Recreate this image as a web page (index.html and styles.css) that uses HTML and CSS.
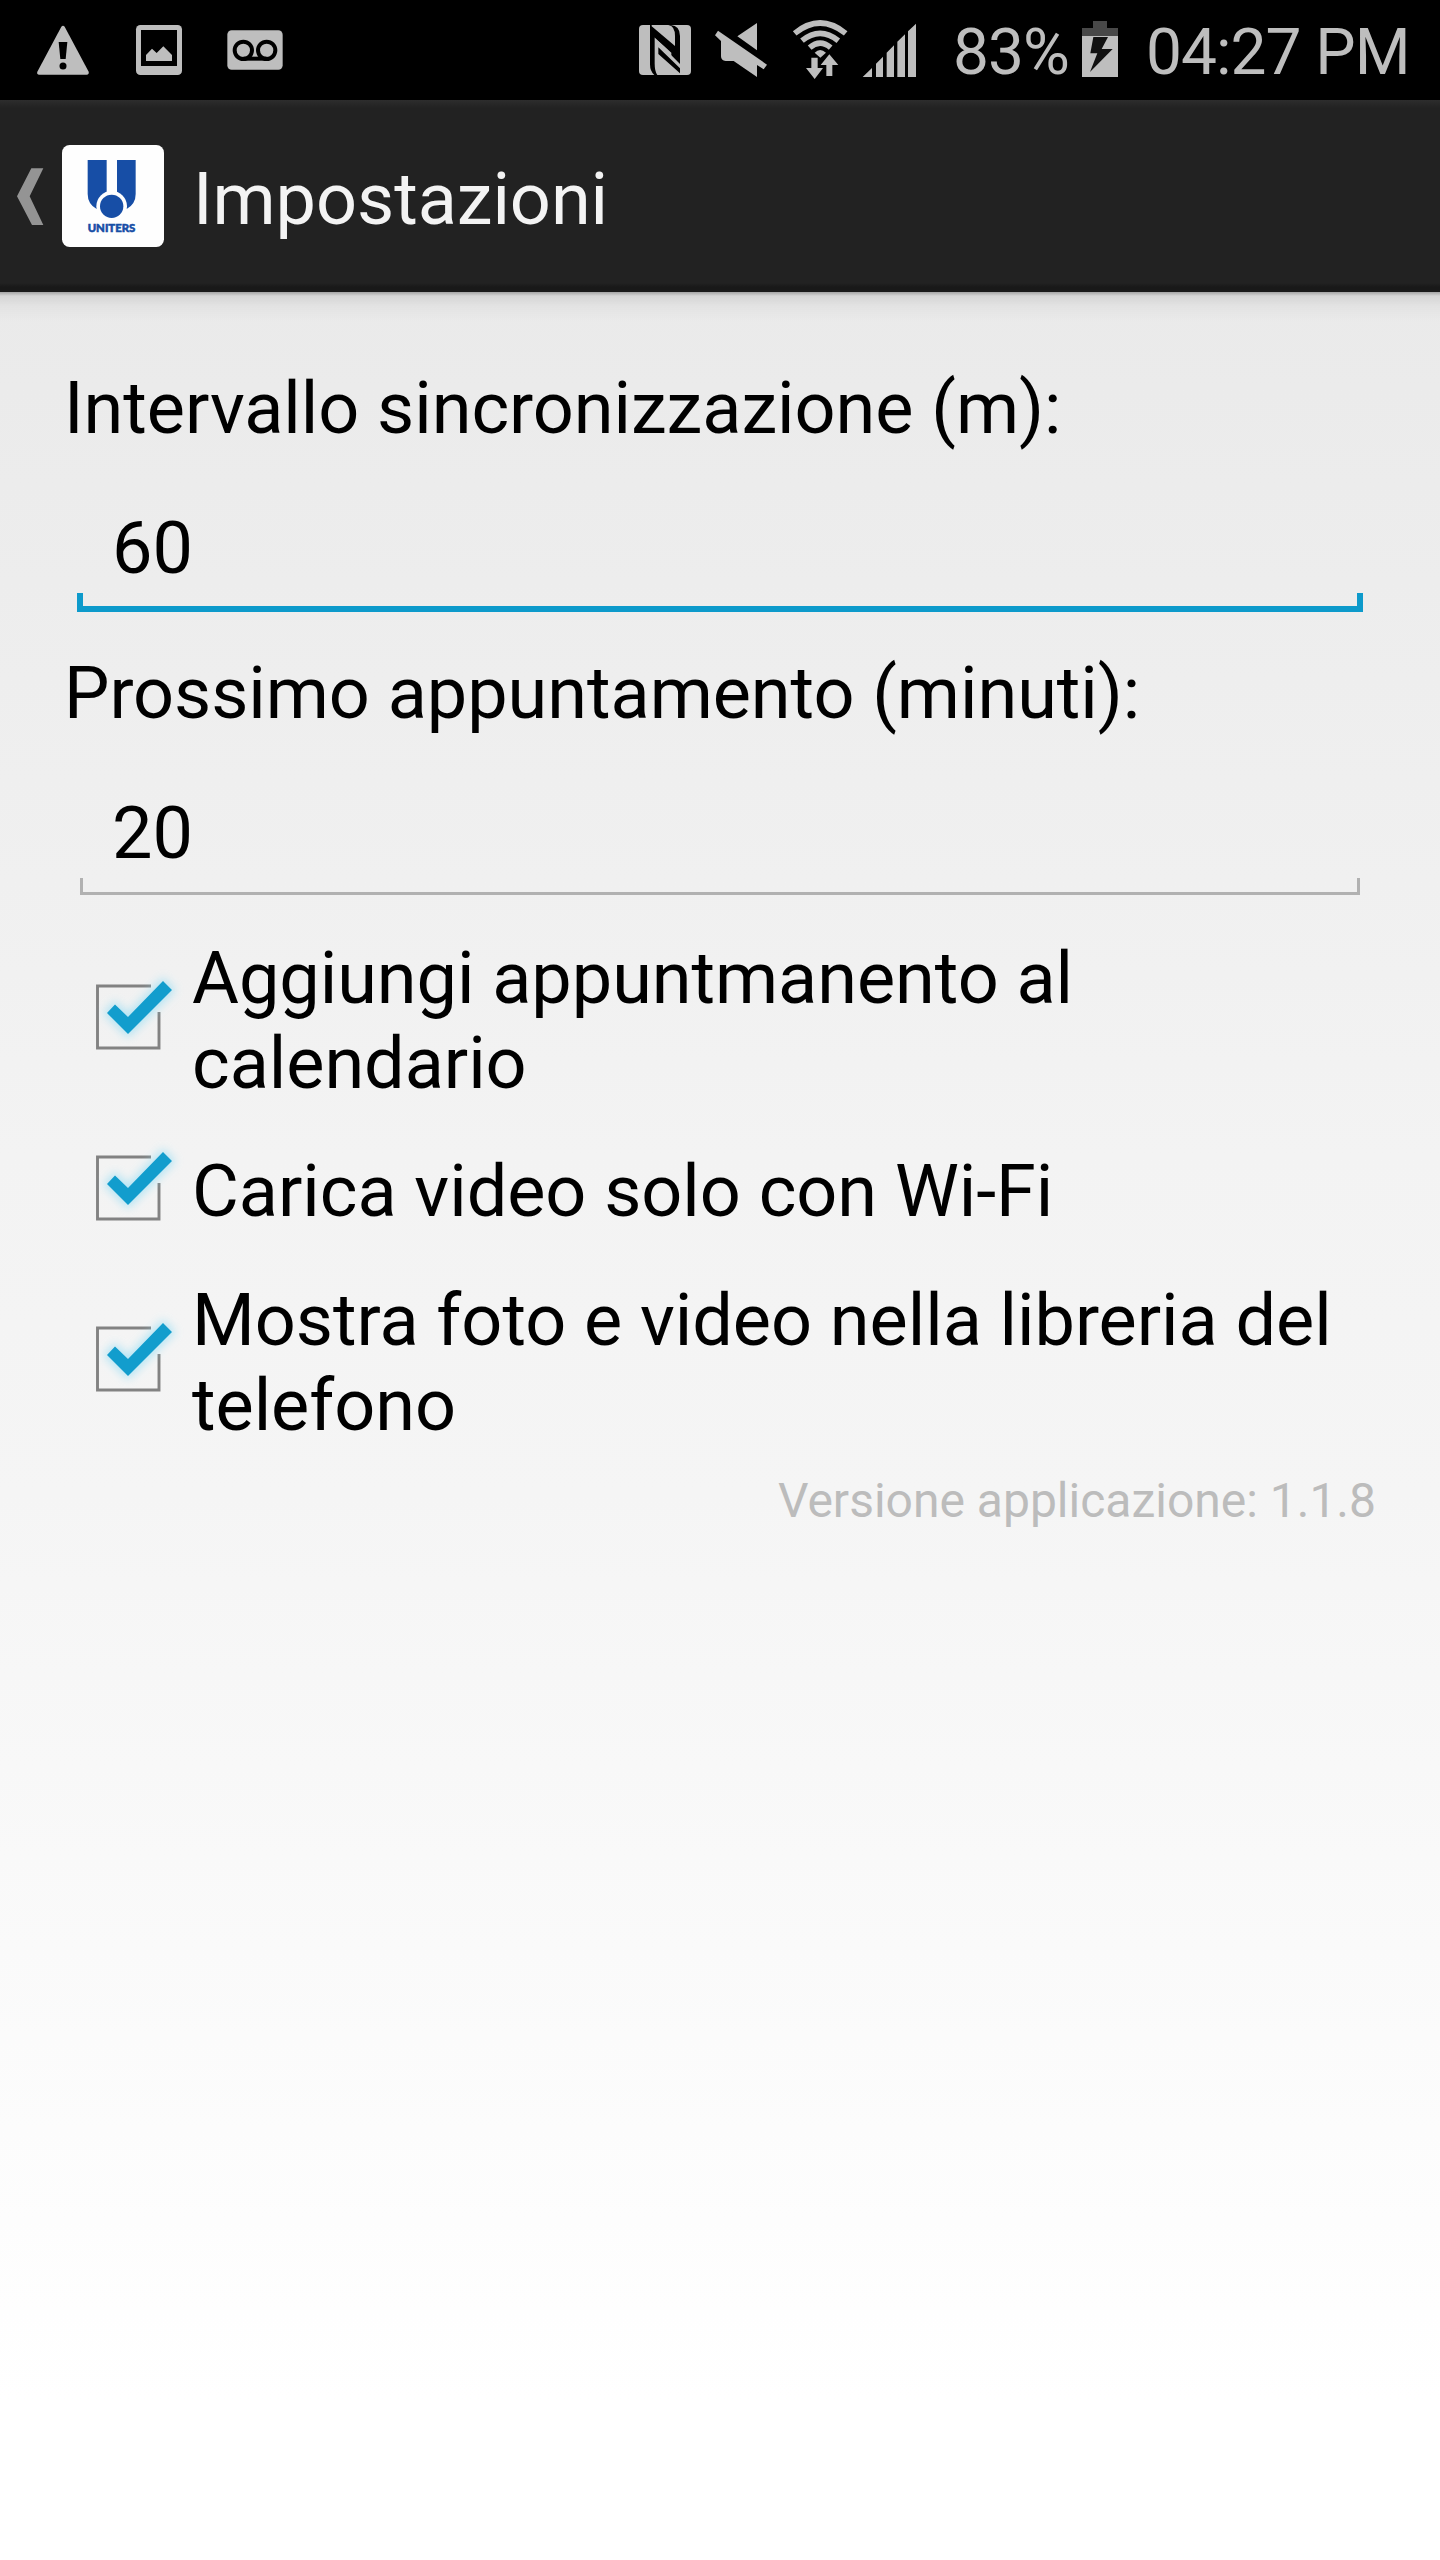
FILE: index.html
```
<!DOCTYPE html>
<html lang="it">
<head>
<meta charset="utf-8">
<title>Impostazioni</title>
<link rel="stylesheet" href="styles.css">
</head>
<body>
<svg class="defs" width="0" height="0" aria-hidden="true">
  <filter id="glow" x="-40%" y="-40%" width="180%" height="180%"><feGaussianBlur stdDeviation="5"/></filter>
  <symbol id="check" viewBox="0 0 110 110">
    <path d="M71 26H17.500V88H79V52" fill="none" stroke="#828282" stroke-width="2.900"/>
    <path d="M27 53L35 44.500L48 57L83 21L92 30L48 74Z" fill="#8edcf5" stroke="#8edcf5" stroke-width="5" opacity=".65" filter="url(#glow)"/>
    <path d="M27 53L35 44.500L48 57L83 21L92 30L48 74Z" fill="#129dcd"/>
  </symbol>
</svg>
<header class="status">
  <svg class="status-left" width="320" height="100" viewBox="0 0 960 300" fill="#bebebe">
    <path d="M184 80Q189 74 194 80L266 215Q268 223 260 224H118Q109 223 112 215Z"/>
    <path d="M176 126H202L197 177H181Z" fill="#000"/><circle cx="189" cy="198" r="10.500" fill="#000"/>
    <rect x="408" y="75" width="138" height="150" rx="13"/><path d="M423 90H531V198H423Z" fill="#000"/>
    <path d="M438 183V165L456 146L470 159L490 139L516 165V183Z"/>
    <rect x="682" y="91" width="166" height="118" rx="13"/>
    <g fill="none" stroke="#000" stroke-width="12"><circle cx="730" cy="151" r="26"/><circle cx="800" cy="151" r="26"/><path d="M730 176H800"/></g>
  </svg>
  <svg class="status-right" width="320" height="100" viewBox="0 0 960 300" fill="#bebebe">
    <rect x="57" y="75" width="156" height="150" rx="12"/>
    <path d="M90 75H152Q180 77 180 108V220L114 162V142L154 175V158L104 112V190Q104 215 112 225H103Q90 214 90 193Z" fill="#000"/>
    <path d="M95 75H145Q165 78 165 108V138L95 79ZM105 116L180 192V221L177 221V225H125Q105 219 105 193Z"/>
    <path d="M90 78L155 140V157L105 113L90 100ZM115 142L180 205V220L115 162Z" fill="#000"/>
    <path d="M352 109L411 69V151ZM294 92L441 194L431 208L411 195V231L341 183H317Q303 181 303 169V123L285 106Z"/>
    <g fill="none" stroke="#bebebe" stroke-width="17"><path d="M524 100Q600 38 677 100"/><path d="M546 122Q600 78 655 122"/><path d="M569 143Q600 116 632 143"/></g>
    <path d="M584 158Q600 142 618 158L601 173Z"/>
    <path d="M574 173H593V204H609L584 237L558 204H574ZM628 163L655 195H637V228H619V195H602Z" stroke="#000" stroke-width="6" paint-order="stroke"/>
    <path d="M728 231L756 204V231ZM768 231V191L789 170V231ZM800 231V158L822 136V231ZM832 231V125L855 103V231ZM864 231V94L888 71V231Z"/>
  </svg>
  <span class="percent">83%</span>
  <svg class="battery" width="36" height="56" viewBox="0 0 108 168">
    <path d="M0 21H33V0H75V21H108V45H0Z" fill="#484848"/><path d="M0 45H108V168H0Z" fill="#bebebe"/>
    <path d="M34 48H78L59 84H92L24 153L46 97H25Z" fill="#111"/>
  </svg>
  <span class="clock">04:27 PM</span>
</header>
<nav class="bar">
  <svg class="back" width="32" height="60" viewBox="0 0 96 180"><path d="M58 4H94L53 88L94 174H60L15 88Z" transform="translate(-3 0)" fill="#949494"/></svg>
  <svg class="logo" width="102" height="102" viewBox="0 0 306 306">
    <rect width="306" height="306" rx="23" fill="#fefefe"/>
    <path d="M77 45H134V192H104Q77 177 77 147ZM165 45H221V147Q221 177 194 192H165Z" fill="#174ea6"/>
    <circle cx="149" cy="184" r="46" fill="#fefefe"/>
    <circle cx="149" cy="184" r="35" fill="#174ea6"/>
    <text x="77" y="261" textLength="143" lengthAdjust="spacingAndGlyphs" class="logo-name">UNITERS</text>
  </svg>
  <h1 class="title">Impostazioni</h1>
</nav>
<main class="content">
  <label class="label" for="sync">Intervallo sincronizzazione (m):</label>
  <div class="field focused"><input id="sync" value="60"></div>
  <label class="label" for="next">Prossimo appuntamento (minuti):</label>
  <div class="field"><input id="next" value="20"></div>
  <div class="option two"><svg class="tick"><use href="#check"/></svg><p>Aggiungi appuntmanento al<br>calendario</p></div>
  <div class="option"><svg class="tick"><use href="#check"/></svg><p>Carica video solo con Wi-Fi</p></div>
  <div class="option two"><svg class="tick"><use href="#check"/></svg><p>Mostra foto e video nella libreria del<br>telefono</p></div>
  <p class="version">Versione applicazione: 1.1.8</p>
</main>
</body>
</html>
```
FILE: styles.css
```
* { box-sizing: border-box; margin: 0; padding: 0; }
body {
  width: 1440px;
  height: 2560px;
  overflow: hidden;
  display: flex;
  flex-direction: column;
  font: 72px/85px Roboto, "Noto Sans", sans-serif;
  color: #000;
  background: #fff;
}
.defs { position: absolute; }
.status {
  height: 100px;
  flex: none;
  display: flex;
  align-items: flex-start;
  background: #000;
  color: #bebebe;
  font-size: 64px;
  line-height: 76px;
  letter-spacing: -1px;
  white-space: nowrap;
}
.status-right { margin-left: 300px; }
.percent { width: 128px; margin: 15px 0 0 13px; }
.battery { margin: 21px 0 0 1px; }
.clock { margin: 15px 0 0 28px; }
.bar {
  height: 192px;
  flex: none;
  display: flex;
  align-items: flex-start;
  background: linear-gradient(#2d2d2d, #222 8px, #222 183px, #191919 187px, #191919);
}
.back { margin: 67px 0 0 13px; }
.logo { margin: 45px 0 0 17px; }
.logo-name {
  font: 900 31px Lato, sans-serif;
  fill: #174ea6;
  stroke: #174ea6;
  stroke-width: 1.5px;
}
.title { margin: 57px 0 0 29px; font-size: 72px; font-weight: 400; letter-spacing: -.05px; color: #f3f3f3; }
.content {
  flex: 1;
  padding: 74px 64px 0;
  display: flex;
  flex-direction: column;
  background:
    linear-gradient(rgba(0,0,0,.3), rgba(0,0,0,.09) 4px, rgba(0,0,0,.03) 14px, transparent 30px) top / 100% 30px no-repeat,
    linear-gradient(#eaeaea, #eee 17%, #f0f0f0 26%, #f3f3f3 38%, #f5f5f5 53%, #fff 93%);
}
.label { display: block; height: 85px; white-space: nowrap; letter-spacing: -.04px; }
.field {
  height: 200px;
  padding: 55px 13px 0;
  flex: none;
}
.field input {
  display: block;
  width: 1286px;
  height: 106px;
  padding: 0 35px 21px;
  font: inherit;
  line-height: 85px;
  border: 0;
  outline: 0;
  background:
    linear-gradient(#b1b1b1, #b1b1b1) 3px 101px / 1280px 3px no-repeat,
    linear-gradient(#b1b1b1, #b1b1b1) 3px 87px / 3px 17px no-repeat,
    linear-gradient(#b1b1b1, #b1b1b1) 1280px 87px / 3px 17px no-repeat;
}
.field.focused input {
  background:
    linear-gradient(#0d9acb, #0d9acb) 0 100px / 1286px 6px no-repeat,
    linear-gradient(#0d9acb, #0d9acb) 0 87px / 6px 19px no-repeat,
    linear-gradient(#0d9acb, #0d9acb) 1280px 87px / 6px 19px no-repeat;
}
.option { display: flex; height: 129px; padding-left: 16px; align-items: flex-start; white-space: nowrap; letter-spacing: -.04px; }
.option.two { height: 213px; }
.tick { width: 110px; height: 110px; margin-top: -18px; flex: none; }
.two .tick { margin-top: 24px; }
.option p { margin-left: 2px; }
.version { margin-top: -19px; font-size: 48px; line-height: 57px; color: #bcbcbc; text-align: right; }
```
